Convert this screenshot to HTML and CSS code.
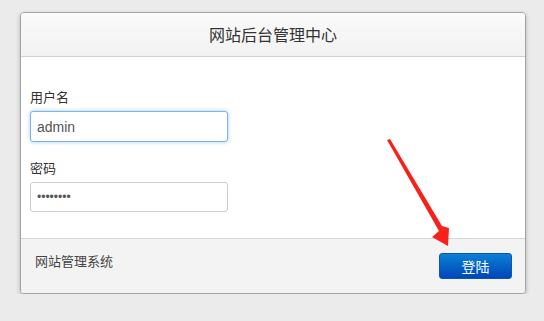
FILE: index.html
```html
<!DOCTYPE html>
<html lang="zh-CN">
<head>
  <meta charset="UTF-8">
  <title>网站后台管理中心</title>
  <link rel="stylesheet" href="styles.css">
</head>
<body>

  <div class="login-box">
    <div class="login-header">网站后台管理中心</div>

    <div class="login-body">
      <label class="label" for="username">用户名</label>
      <input type="text" id="username" class="field focused" value="admin">

      <label class="label label-second" for="password">密码</label>
      <input type="password" id="password" class="field" value="12345678">
    </div>

    <div class="login-footer">
      <span class="footer-text">网站管理系统</span>
      <button class="btn-login">登陆</button>
    </div>
  </div>

  <!-- red annotation arrow pointing at the button -->
  <svg class="arrow" width="544" height="321" viewBox="0 0 544 321">
    <polygon points="387,140 390,139 442,226 449,228 448,246 432,237 439,231" fill="#f8211a"/>
  </svg>

</body>
</html>
```

FILE: styles.css
```css
body {
  margin: 0;
  padding: 12px 18px 0 20px;
  background-color: #ebebeb;
  font-family: "Microsoft YaHei", "Noto Sans CJK SC", "Liberation Sans", sans-serif;
  color: #333;
}
.login-box {
  width: 504px;
  background: #fff;
  border: 1px solid #a3a3a3;
  border-radius: 4px;
  box-shadow: 0 2px 4px rgba(0, 0, 0, 0.25);
  overflow: hidden;
}
.login-header {
  height: 43px;
  line-height: 43px;
  text-align: center;
  font-size: 16px;
  color: #333;
  background: linear-gradient(#fafafa, #f2f2f2);
  border-bottom: 1px solid #cfcfcf;
}
.login-body {
  display: flex;
  flex-direction: column;
  align-items: flex-start;
  padding: 30px 9px 26px;
}
.label {
  font-size: 13px;
  line-height: 20px;
  color: #333;
  margin-bottom: 4px;
}
.label-second {
  margin-top: 16px;
}
.field {
  box-sizing: border-box;
  width: 198px;
  height: 31px;
  padding: 0 6px;
  border: 1px solid #ccc;
  border-radius: 3px;
  font-family: "Liberation Sans", Arial, sans-serif;
  font-size: 14px;
  color: #555;
  background: #fff;
  outline: none;
}
#password {
  height: 30px;
  font-size: 12px;
}
.focused {
  border-color: #7ab4ea;
  box-shadow: 0 0 4px rgba(102, 175, 233, 0.6);
}
.login-footer {
  display: flex;
  justify-content: space-between;
  align-items: flex-start;
  height: 55px;
  box-sizing: border-box;
  padding: 14px 13px 0 14px;
  background: #f3f3f3;
  border-top: 1px solid #d6d6d6;
}
.footer-text {
  font-size: 13px;
  line-height: 15px;
  color: #444;
}
.btn-login {
  width: 73px;
  height: 26px;
  padding: 0;
  border: 1px solid #0a55b5;
  border-radius: 3px;
  background: linear-gradient(#0a80d5, #0046b9);
  color: #fff;
  font-family: inherit;
  font-size: 14px;
  cursor: pointer;
}
.arrow {
  position: absolute;
  left: 0;
  top: 0;
  pointer-events: none;
}
```
